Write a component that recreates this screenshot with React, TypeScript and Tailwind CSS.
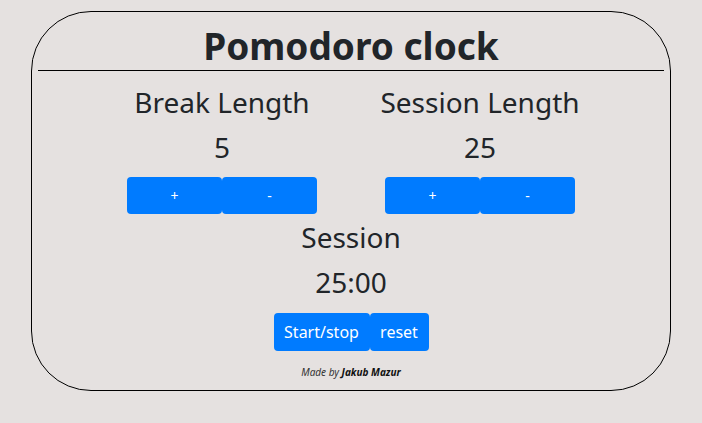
const font = { fontFamily: '"Noto Sans", "Open Sans", sans-serif' };

function Counter({ label, value }: { label: string; value: number }) {
  return (
    <div className="flex w-[200px] flex-col items-center">
      <h2 className="text-[28px] leading-[36px]">{label}</h2>
      <div className="mt-[9px] text-[28px] leading-[36px]">{value}</div>
      <div className="mt-[12px] flex">
        <button className="h-[37px] w-[95px] rounded-[4px] bg-[#007bff] text-[14px] text-white">+</button>
        <button className="h-[37px] w-[95px] rounded-[4px] bg-[#007bff] text-[14px] text-white">-</button>
      </div>
    </div>
  );
}

export default function App() {
  return (
    <div className="h-[423px] w-full bg-[#e5e1e0] pt-[11px] text-[#212529]" style={font}>
      <div className="mx-auto flex h-[380px] w-[640px] flex-col items-center rounded-[60px] border border-black">
        <h1 className="mt-[10px] text-[37px] font-bold leading-[48px]">Pomodoro clock</h1>
        <hr className="w-[626px] border-t border-black" />
        <div className="mt-[13px] flex gap-[58px]">
          <Counter label="Break Length" value={5} />
          <Counter label="Session Length" value={25} />
        </div>
        <div className="mt-[5px] text-[28px] leading-[36px]">Session</div>
        <div className="mt-[9px] text-[28px] leading-[36px]">25:00</div>
        <div className="mt-[13px] flex">
          <button className="h-[38px] w-[96px] rounded-[4px] bg-[#007bff] text-[16px] text-white">Start/stop</button>
          <button className="h-[38px] w-[59px] rounded-[4px] bg-[#007bff] text-[16px] text-white">reset</button>
        </div>
        <p className="mt-[14px] text-[10px] italic text-[#333]">
          Made by <span className="font-bold text-[#111]">Jakub Mazur</span>
        </p>
      </div>
    </div>
  );
}
